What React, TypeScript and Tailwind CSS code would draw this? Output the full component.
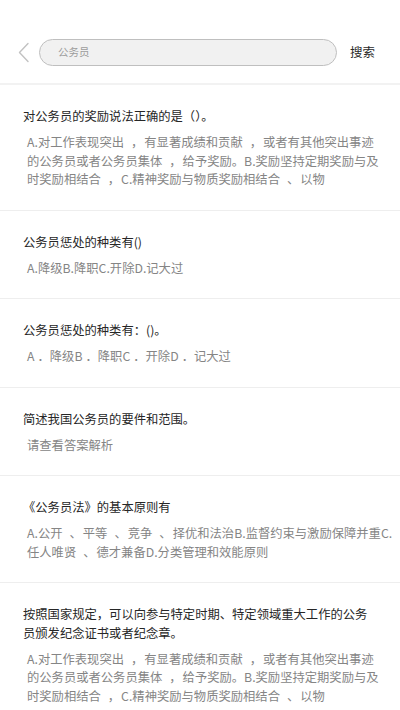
import type { ReactNode } from "react";

/* ── DATA ─────────────────────────────────────────── */
const rewardLines = [
  "A.对工作表现突出，有显著成绩和贡献，或者有其他突出事迹",
  "的公务员或者公务员集体，给予奖励。B.奖励坚持定期奖励与及",
  "时奖励相结合，C.精神奖励与物质奖励相结合、以物",
];

const results = [
  { id: 1, title: "对公务员的奖励说法正确的是（）。", lines: rewardLines },
  { id: 2, title: "公务员惩处的种类有()", lines: ["A.降级B.降职C.开除D.记大过"] },
  { id: 3, title: "公务员惩处的种类有：()。", lines: ["A．降级B．降职C．开除D．记大过"] },
  { id: 4, title: "简述我国公务员的要件和范围。", lines: ["请查看答案解析"] },
  {
    id: 5,
    title: "《公务员法》的基本原则有",
    lines: [
      "A.公开、平等、竞争、择优和法治B.监督约束与激励保障并重C.",
      "任人唯贤、德才兼备D.分类管理和效能原则",
    ],
  },
  {
    id: 6,
    title: "按照国家规定，可以向参与特定时期、特定领域重大工作的公务员颁发纪念证书或者纪念章。",
    lines: rewardLines,
  },
];

// answer text puts extra room round its commas
function spaced(line: string): ReactNode[] {
  return line.split(/([，、．])/).map((part, i) => {
    if (part === "，" || part === "、")
      return <span key={i} className="pl-[7px] pr-[1px]">{part}</span>;
    if (part === "．")
      return <span key={i} className="pl-[3px]">{part}</span>;
    return part;
  });
}

/* ── HEADER ───────────────────────────────────────── */
function SearchBar() {
  return (
    <div className="flex items-center pt-[39px] pb-[17px] pl-[18px] pr-[25px] border-b-2 border-[#f2f2f2]">
      <svg width="11" height="21" viewBox="0 0 11 21" fill="none" className="shrink-0">
        <path d="M10 1.5 L1.5 10.5 L10 19.5" stroke="#c2c2c2" strokeWidth="1.4" strokeLinecap="round" strokeLinejoin="round" />
      </svg>
      <div className="ml-[10px] flex-1 h-[27px] rounded-full border border-[#bfbfbf] bg-[#f1f1f1] flex items-center pl-[18px]">
        <span className="text-[10.5px] text-[#9c9c9c] leading-none">公务员</span>
      </div>
      <span className="ml-[13px] text-[12.5px] text-[#2a2a2a] leading-none">搜索</span>
    </div>
  );
}

/* ── APP ──────────────────────────────────────────── */
export default function App() {
  return (
    <div className="w-[400px] min-h-[710px] bg-white font-['Noto_Sans_CJK_SC',sans-serif]">
      <SearchBar />
      <ul>
        {results.map((item) => (
          <li key={item.id} className="pt-[22px] pb-[21px] pl-[23px] pr-[28px] border-b border-[#eeeeee]">
            <p className="text-[12.3px] leading-[18.5px] text-[#262626]">{item.title}</p>
            <div className="mt-[7.5px] pl-[4px] text-[12.3px] leading-[18.5px] text-[#858585]">
              {item.lines.map((line) => (
                <div key={line} className="whitespace-nowrap">{spaced(line)}</div>
              ))}
            </div>
          </li>
        ))}
      </ul>
    </div>
  );
}
